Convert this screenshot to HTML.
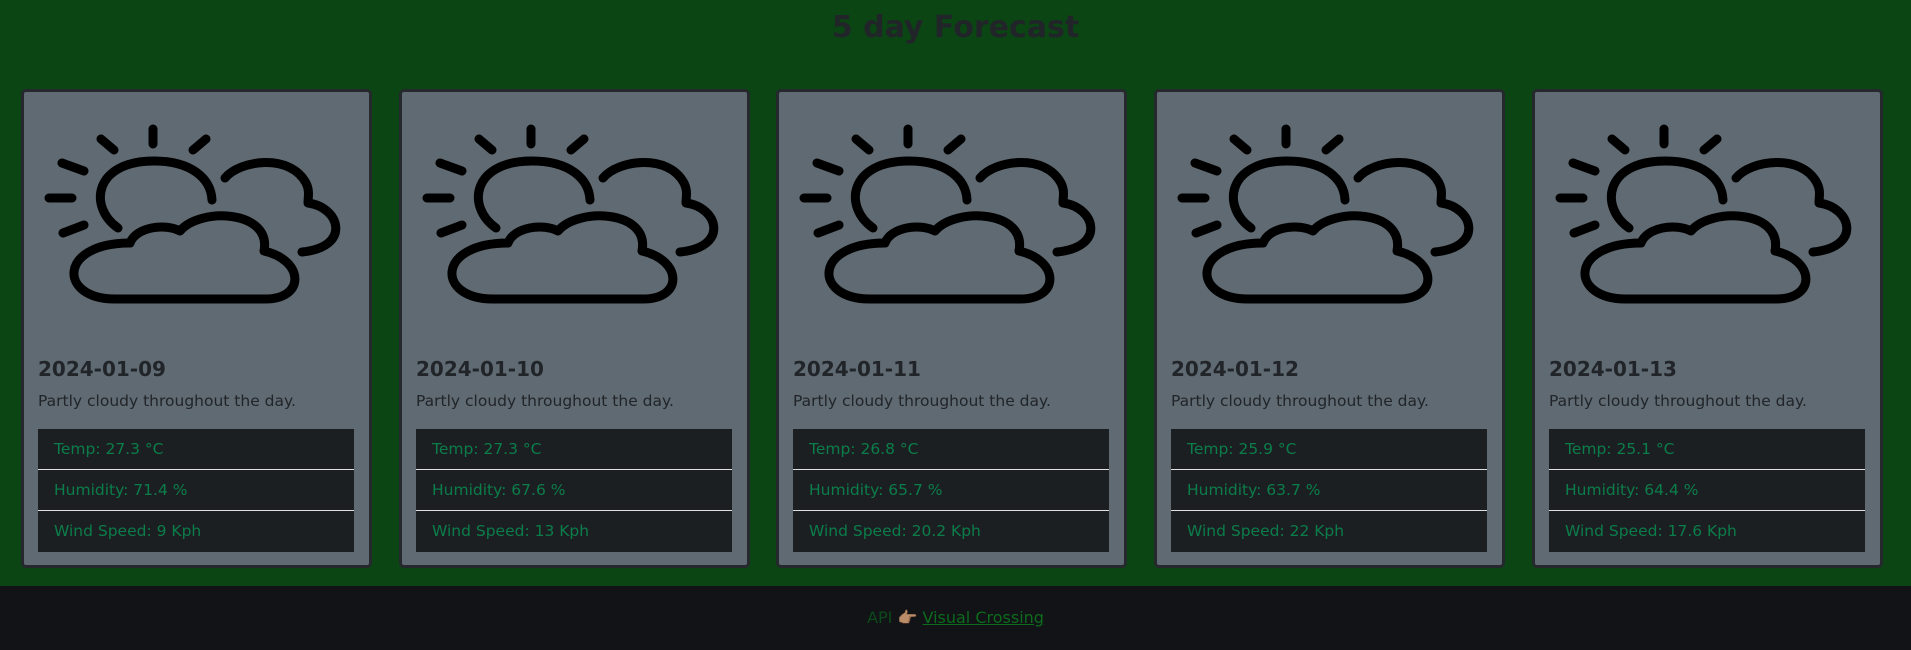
<!DOCTYPE html>
<html><head><meta charset="utf-8">
<style>
html,body{margin:0;padding:0;}
body{width:1911px;height:650px;background:#0b4513;position:relative;overflow:hidden;font-family:"DejaVu Sans","Liberation Sans",sans-serif;}
h1{position:absolute;top:6px;left:0;width:1911px;text-align:center;margin:0;font-size:30px;font-weight:bold;color:#212529;line-height:44px;}
.card{position:absolute;top:89px;width:345px;height:473px;background:#5f6a72;border:3px solid #25282c;border-radius:5px;}
.card svg{position:absolute;left:16px;top:23px;}
.date{position:absolute;left:14px;top:265px;font-size:20px;font-weight:bold;color:#212529;margin:0;}
.desc{position:absolute;left:14px;top:300px;font-size:15.5px;color:#212529;}
ul{position:absolute;left:14px;top:337px;width:316px;margin:0;padding:0;list-style:none;}
li{background:#1c1f22;color:#0b7d4a;font-size:15.5px;height:40px;line-height:40px;padding-left:16px;border-bottom:1px solid #e0e0e0;}
li:last-child{border-bottom:none;height:41px;}
footer{position:absolute;left:0;top:586px;width:1911px;height:64px;background:#121316;text-align:center;line-height:64px;font-size:16px;color:#0b4a1a;}
footer a{color:#0c6b1c;text-decoration:underline;}
</style></head><body>
<h1>5 day Forecast</h1>

<div class="card" style="left:21px">
<svg width="320" height="200" viewBox="0 0 320 200" fill="none" stroke="#000" stroke-width="9" stroke-linecap="round" stroke-linejoin="round">
<path d="M113 14V29M61 24L74 35M166 24L153 35M22 48L44 56M9 83H32M23 118L44 110"/>
<path d="M78 113C48 92 54 46 114 46C152 46 171 64 172 85"/>
<path d="M185 63C200 45 250 38 266 68C270 76 268 82 268 88C300 92 312 132 262 137"/>
<path d="M90 128C96 112 125 108 140 116C160 92 232 95 224 136C264 145 266 184 225 184L75 184C18 184 18 128 90 128Z"/>
</svg>
<h3 class="date">2024-01-09</h3>
<div class="desc">Partly cloudy throughout the day.</div>
<ul><li>Temp: 27.3 °C</li><li>Humidity: 71.4 %</li><li>Wind Speed: 9 Kph</li></ul>
</div>

<div class="card" style="left:399px">
<svg width="320" height="200" viewBox="0 0 320 200" fill="none" stroke="#000" stroke-width="9" stroke-linecap="round" stroke-linejoin="round">
<path d="M113 14V29M61 24L74 35M166 24L153 35M22 48L44 56M9 83H32M23 118L44 110"/>
<path d="M78 113C48 92 54 46 114 46C152 46 171 64 172 85"/>
<path d="M185 63C200 45 250 38 266 68C270 76 268 82 268 88C300 92 312 132 262 137"/>
<path d="M90 128C96 112 125 108 140 116C160 92 232 95 224 136C264 145 266 184 225 184L75 184C18 184 18 128 90 128Z"/>
</svg>
<h3 class="date">2024-01-10</h3>
<div class="desc">Partly cloudy throughout the day.</div>
<ul><li>Temp: 27.3 °C</li><li>Humidity: 67.6 %</li><li>Wind Speed: 13 Kph</li></ul>
</div>

<div class="card" style="left:776px">
<svg width="320" height="200" viewBox="0 0 320 200" fill="none" stroke="#000" stroke-width="9" stroke-linecap="round" stroke-linejoin="round">
<path d="M113 14V29M61 24L74 35M166 24L153 35M22 48L44 56M9 83H32M23 118L44 110"/>
<path d="M78 113C48 92 54 46 114 46C152 46 171 64 172 85"/>
<path d="M185 63C200 45 250 38 266 68C270 76 268 82 268 88C300 92 312 132 262 137"/>
<path d="M90 128C96 112 125 108 140 116C160 92 232 95 224 136C264 145 266 184 225 184L75 184C18 184 18 128 90 128Z"/>
</svg>
<h3 class="date">2024-01-11</h3>
<div class="desc">Partly cloudy throughout the day.</div>
<ul><li>Temp: 26.8 °C</li><li>Humidity: 65.7 %</li><li>Wind Speed: 20.2 Kph</li></ul>
</div>

<div class="card" style="left:1154px">
<svg width="320" height="200" viewBox="0 0 320 200" fill="none" stroke="#000" stroke-width="9" stroke-linecap="round" stroke-linejoin="round">
<path d="M113 14V29M61 24L74 35M166 24L153 35M22 48L44 56M9 83H32M23 118L44 110"/>
<path d="M78 113C48 92 54 46 114 46C152 46 171 64 172 85"/>
<path d="M185 63C200 45 250 38 266 68C270 76 268 82 268 88C300 92 312 132 262 137"/>
<path d="M90 128C96 112 125 108 140 116C160 92 232 95 224 136C264 145 266 184 225 184L75 184C18 184 18 128 90 128Z"/>
</svg>
<h3 class="date">2024-01-12</h3>
<div class="desc">Partly cloudy throughout the day.</div>
<ul><li>Temp: 25.9 °C</li><li>Humidity: 63.7 %</li><li>Wind Speed: 22 Kph</li></ul>
</div>

<div class="card" style="left:1532px">
<svg width="320" height="200" viewBox="0 0 320 200" fill="none" stroke="#000" stroke-width="9" stroke-linecap="round" stroke-linejoin="round">
<path d="M113 14V29M61 24L74 35M166 24L153 35M22 48L44 56M9 83H32M23 118L44 110"/>
<path d="M78 113C48 92 54 46 114 46C152 46 171 64 172 85"/>
<path d="M185 63C200 45 250 38 266 68C270 76 268 82 268 88C300 92 312 132 262 137"/>
<path d="M90 128C96 112 125 108 140 116C160 92 232 95 224 136C264 145 266 184 225 184L75 184C18 184 18 128 90 128Z"/>
</svg>
<h3 class="date">2024-01-13</h3>
<div class="desc">Partly cloudy throughout the day.</div>
<ul><li>Temp: 25.1 °C</li><li>Humidity: 64.4 %</li><li>Wind Speed: 17.6 Kph</li></ul>
</div>

<footer>API <span style="color:#c98a62">👉🏽</span> <a>Visual Crossing</a></footer>
</body></html>
